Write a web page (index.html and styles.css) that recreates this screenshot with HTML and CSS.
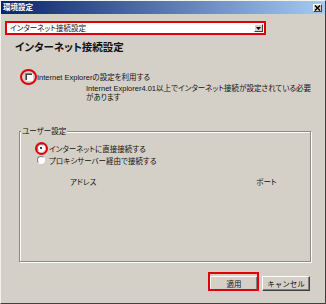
FILE: index.html
```html
<!DOCTYPE html>
<html lang="ja">
<head>
  <meta charset="UTF-8" />
  <title>環境設定</title>
  <link rel="stylesheet" href="styles.css">
</head>
<body>
  <div class="window">
    <div class="titlebar">
      <span class="title">環境設定</span>
      <span class="close">
        <svg width="7" height="6" viewBox="0 0 7 6"><path d="M1 0.5 L6 5.5 M6 0.5 L1 5.5" stroke="#000" stroke-width="1.4"/></svg>
      </span>
    </div>

    <div class="dialog">
      <!-- page selector -->
      <div class="combo">
        <span class="combo-text">インターネット接続設定</span>
        <span class="combo-btn">
          <svg width="5" height="3" viewBox="0 0 5 3"><path d="M0 0 H5 L2.5 3 Z" fill="#000"/></svg>
        </span>
      </div>

      <h1 class="heading">インターネット接続設定</h1>

      <div class="ie-row">
        <span class="check"><span class="mark-circle big"></span></span>
        <span class="ie-label">Internet Explorerの設定を利用する</span>
      </div>
      <p class="note">Internet Explorer4.01以上でインターネット接続が設定されている必要<br>があります</p>

      <div class="group">
        <span class="legend">ユーザー設定</span>
        <div class="radio-row">
          <span class="radio on"><span class="mark-circle small"></span></span>
          <span>インターネットに直接接続する</span>
        </div>
        <div class="radio-row">
          <span class="radio"></span>
          <span>プロキシサーバー経由で接続する</span>
        </div>
        <div class="proxy-row">
          <span class="addr">アドレス</span>
          <span class="port">ポート</span>
        </div>
      </div>

      <div class="buttons">
        <button class="btn apply">適用<span class="mark-box"></span></button>
        <button class="btn">キャンセル</button>
      </div>
    </div>
  </div>
</body>
</html>
```

FILE: styles.css
```css
* {
  box-sizing: border-box;
}

body {
  margin: 0;
  background: #d4d0c8;
  font-family: "Liberation Sans", "Noto Sans CJK JP", sans-serif;
  font-feature-settings: "palt";
  color: #111;
}

.window {
  width: 326px;
  height: 304px;
  background: #d4d0c8;
  border: 1px solid;
  border-color: #f4f2ee #404040 #404040 #f4f2ee;
}

/* title bar */
.titlebar {
  height: 13px;
  background: linear-gradient(to right, #0a246a, #a6caf0);
  display: flex;
  align-items: center;
  justify-content: space-between;
  padding: 0 3px 0 2px;
}

.title {
  color: #fff;
  font-weight: bold;
  font-size: 7.5px;
  line-height: 9px;
}

.close {
  width: 9px;
  height: 8px;
  background: #d4d0c8;
  border: 1px solid;
  border-color: #fff #404040 #404040 #fff;
  display: flex;
  align-items: center;
  justify-content: center;
}

.dialog {
  padding: 7px 4px 0;
  font-size: 7.5px;
}

/* combo box */
.combo {
  width: 261px;
  height: 14px;
  border: 2px solid #e0000b;
  background: #fff;
  display: flex;
  align-items: center;
  padding-left: 3px;
}

.combo-text {
  flex: 1;
  line-height: 9px;
}

.combo-btn {
  width: 9px;
  height: 8px;
  margin-right: 1px;
  background: #d4d0c8;
  border: 1px solid;
  border-color: #fff #404040 #404040 #fff;
  display: flex;
  align-items: center;
  justify-content: center;
}

.heading {
  margin: 5px 0 0 10px;
  font-size: 10.5px;
  line-height: 14px;
  font-weight: bold;
}

/* IE setting */
.ie-row {
  margin-top: 18px;
  padding-left: 20px;
  display: flex;
  align-items: center;
  height: 10px;
}

.check {
  position: relative;
  width: 8px;
  height: 8px;
  background: #fff;
  border: 1px solid;
  border-color: #808080 #fff #fff #808080;
  box-shadow: inset 1px 1px 0 #404040;
}

.ie-label {
  margin-left: 4px;
  line-height: 9px;
}

.note {
  margin: 2px 0 0 81px;
  line-height: 9px;
}

/* annotation marks */
.mark-circle {
  position: absolute;
  border: 2px solid #e0000b;
  border-radius: 50%;
}

.mark-circle.big {
  width: 17px;
  height: 16px;
  left: -6px;
  top: -5px;
}

.mark-circle.small {
  width: 13px;
  height: 13px;
  left: -3px;
  top: -3px;
}

.mark-box {
  position: absolute;
  left: -3px;
  right: -2px;
  top: -5px;
  bottom: -1px;
  border: 2px solid #e0000b;
}

/* user settings group */
.group {
  position: relative;
  margin: 29px 0 0 14px;
  width: 292px;
  height: 131px;
  padding: 10px 0 0 17px;
  border: 1px solid #8c8a84;
  box-shadow: inset 1px 1px 0 #fff, 1px 1px 0 #fff;
}

/* caption sits on the top border */
.legend {
  position: absolute;
  left: 1px;
  top: -5px;
  padding: 0 1px;
  line-height: 9px;
  background: #d4d0c8;
}

.radio-row {
  display: flex;
  align-items: center;
  height: 12px;
}

.radio {
  position: relative;
  width: 8px;
  height: 8px;
  margin-right: 4px;
  border-radius: 50%;
  background: #fff;
  border: 1px solid;
  border-color: #808080 #fff #fff #808080;
}

.radio.on::after {
  content: "";
  position: absolute;
  left: 2px;
  top: 2px;
  width: 2px;
  height: 2px;
  border-radius: 50%;
  background: #000;
}

.proxy-row {
  margin-top: 11px;
  padding-left: 33px;
  display: flex;
  line-height: 12px;
}

.port {
  margin-left: 160px;
}

/* bottom buttons */
.buttons {
  margin-top: 14px;
  padding-right: 11px;
  display: flex;
  justify-content: flex-end;
  gap: 4px;
}

.btn {
  position: relative;
  width: 48px;
  height: 15px;
  padding: 0;
  font-family: inherit;
  font-size: 7.5px;
  color: #111;
  background: #d4d0c8;
  border: 1px solid;
  border-color: #fff #404040 #404040 #fff;
  box-shadow: inset -1px -1px 0 #808080;
}
```
